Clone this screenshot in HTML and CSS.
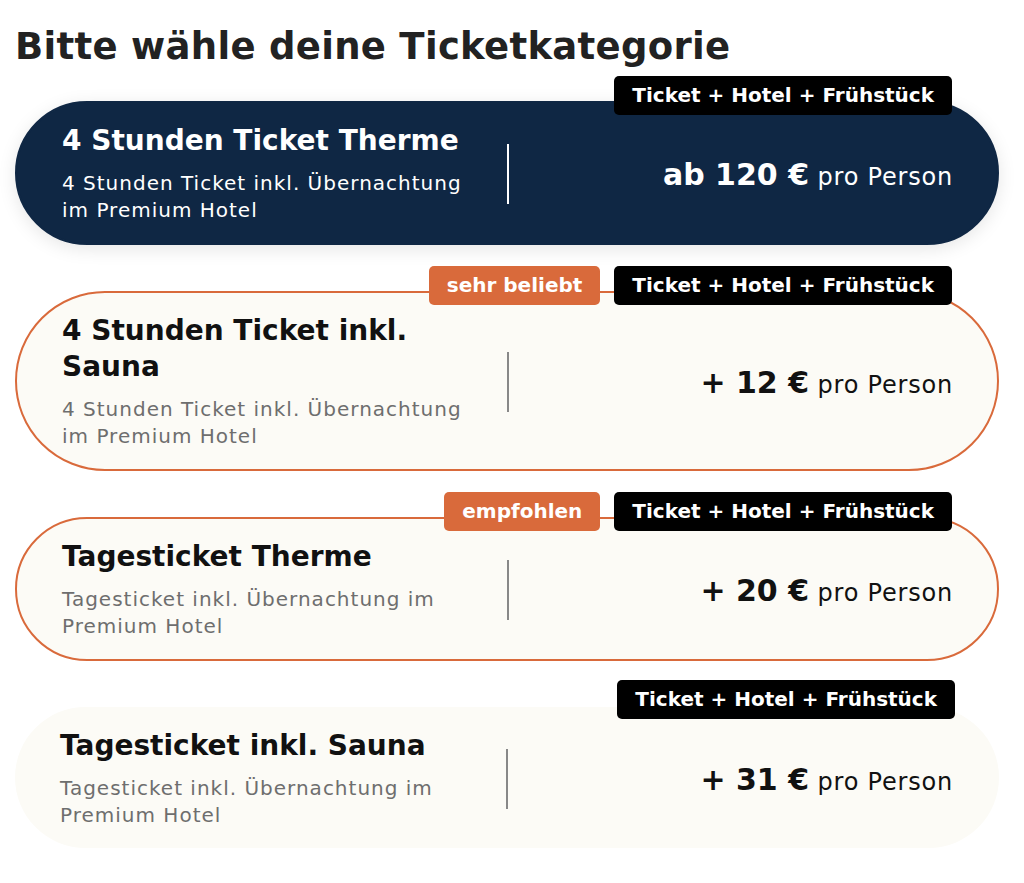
FILE: index.html
```html
<!DOCTYPE html>
<html lang="de">
<head>
  <meta charset="UTF-8" />
  <title>Ticketkategorie</title>
  <link rel="stylesheet" href="styles.css">
</head>
<body>

  <div class="page">
    <h1>Bitte wähle deine Ticketkategorie</h1>

    <div class="ticket-list">

      <div class="ticket ticket-dark">
        <div class="ticket-tags">
          <span class="tag tag-black">Ticket + Hotel + Frühstück</span>
        </div>
        <div class="ticket-info">
          <h2>4 Stunden Ticket Therme</h2>
          <p>4 Stunden Ticket inkl. Übernachtung im Premium Hotel</p>
        </div>
        <div class="ticket-divider"></div>
        <div class="ticket-price"><strong>ab 120 €</strong> pro Person</div>
      </div>

      <div class="ticket ticket-highlight">
        <div class="ticket-tags">
          <span class="tag tag-orange">sehr beliebt</span>
          <span class="tag tag-black">Ticket + Hotel + Frühstück</span>
        </div>
        <div class="ticket-info">
          <h2>4 Stunden Ticket inkl. Sauna</h2>
          <p>4 Stunden Ticket inkl. Übernachtung im Premium Hotel</p>
        </div>
        <div class="ticket-divider"></div>
        <div class="ticket-price"><strong>+ 12 €</strong> pro Person</div>
      </div>

      <div class="ticket ticket-highlight">
        <div class="ticket-tags">
          <span class="tag tag-orange">empfohlen</span>
          <span class="tag tag-black">Ticket + Hotel + Frühstück</span>
        </div>
        <div class="ticket-info">
          <h2>Tagesticket Therme</h2>
          <p>Tagesticket inkl. Übernachtung im Premium Hotel</p>
        </div>
        <div class="ticket-divider"></div>
        <div class="ticket-price"><strong>+ 20 €</strong> pro Person</div>
      </div>

      <div class="ticket ticket-plain">
        <div class="ticket-tags">
          <span class="tag tag-black">Ticket + Hotel + Frühstück</span>
        </div>
        <div class="ticket-info">
          <h2>Tagesticket inkl. Sauna</h2>
          <p>Tagesticket inkl. Übernachtung im Premium Hotel</p>
        </div>
        <div class="ticket-divider"></div>
        <div class="ticket-price"><strong>+ 31 €</strong> pro Person</div>
      </div>

    </div>
  </div>

</body>
</html>
```

FILE: styles.css
```css
body {
  margin: 0;
  font-family: "DejaVu Sans", Verdana, sans-serif;
  background-color: #fff;
  color: #111;
}
.page {
  padding: 25px 25px 0 15px;
}
h1 {
  font-size: 37px;
  font-weight: 700;
  line-height: 43px;
  letter-spacing: 0.3px;
  color: #222;
  margin: 0 0 33px 0;
}
.ticket-list {
  display: flex;
  flex-direction: column;
  gap: 46px;
}
.ticket {
  position: relative;
  display: flex;
  align-items: center;
  padding: 20px 44px 19px 45px;
  border: 2px solid transparent;
  border-radius: 100px;
  background-color: #fcfbf6;
}
.ticket-dark {
  background-color: #0f2744;
  border-color: #0f2744;
  color: #fff;
  box-shadow: 0 4px 18px rgba(0,0,0,0.10);
}
.ticket-highlight {
  border-color: #d96a3b;
}
.ticket-plain {
  border: none;
  padding: 21px 46px 19px 45px;
}
.ticket-tags {
  position: absolute;
  top: -27px;
  right: 45px;
  display: flex;
  gap: 14px;
}
.ticket-plain .ticket-tags {
  top: -27px;
  right: 44px;
}
.tag {
  font-size: 20px;
  font-weight: 700;
  line-height: 27px;
  padding: 6px 18px;
  border-radius: 5px;
  color: #fff;
}
.tag-black {
  background-color: #000;
}
.tag-orange {
  background-color: #d96a3b;
}
.ticket-info {
  flex: 1;
}
.ticket-info h2 {
  max-width: 415px;
  font-size: 28px;
  font-weight: 700;
  line-height: 36px;
  margin: 0 0 11px 0;
}
.ticket-info p {
  max-width: 415px;
  font-size: 20px;
  line-height: 27px;
  letter-spacing: 1px;
  margin: 0;
  color: #6e6e6e;
}
.ticket-dark .ticket-info p {
  color: #fff;
}
.ticket-divider {
  width: 2px;
  height: 60px;
  background-color: #888;
}
.ticket-dark .ticket-divider {
  background-color: #fff;
}
.ticket-price {
  flex: 1;
  text-align: right;
  font-size: 24px;
  letter-spacing: 0.8px;
  padding-top: 2px;
}
.ticket-price strong {
  font-size: 30px;
  font-weight: 700;
  letter-spacing: 0;
}
```
